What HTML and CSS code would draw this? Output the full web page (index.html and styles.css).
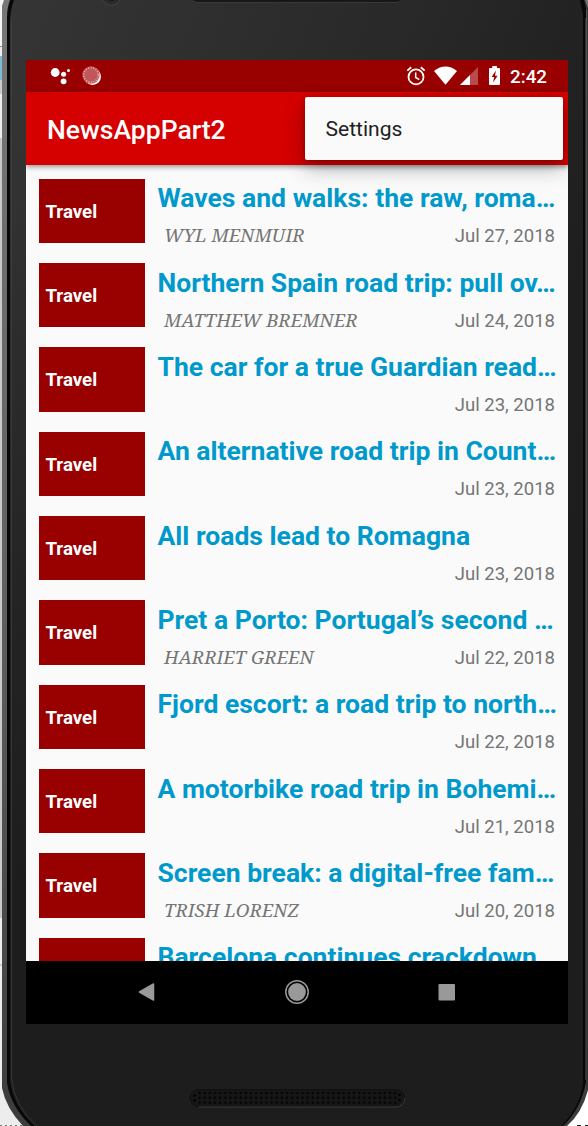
FILE: index.html
```html
<!DOCTYPE html>
<html lang="en">
<head>
<meta charset="utf-8">
<title>NewsAppPart2</title>
<link rel="stylesheet" href="styles.css">
</head>
<body>
<div class="stage">
  <svg class="device" width="588" height="1126" viewBox="0 0 588 1126" aria-hidden="true">
    <defs>
      <linearGradient id="body" gradientUnits="userSpaceOnUse" x1="10" y1="60" x2="580" y2="300">
        <stop offset="0" stop-color="#343435"/><stop offset=".5" stop-color="#2a2a2a"/><stop offset="1" stop-color="#1e1e1e"/>
      </linearGradient>
      <linearGradient id="lower" gradientUnits="userSpaceOnUse" x1="0" y1="200" x2="0" y2="900">
        <stop offset="0" stop-color="#1d1d1d" stop-opacity="0"/><stop offset="1" stop-color="#1d1d1d"/>
      </linearGradient>
      <linearGradient id="edge" x1="0" y1="0" x2="0" y2="1">
        <stop offset="0" stop-color="#777"/><stop offset=".5" stop-color="#626262"/><stop offset="1" stop-color="#3c3c3c"/>
      </linearGradient>
      <pattern id="holes" x="197" y="1090.5" width="5.15" height="4.9" patternUnits="userSpaceOnUse">
        <circle cx="2.5" cy="2.5" r="1.25" fill="#020202"/>
      </pattern>
    </defs>
    <rect width="588" height="1126" fill="#ededed"/>
    <rect width="3" height="46" fill="#f5f5f5"/>
    <rect y="46" width="3" height="1" fill="#888"/>
    <rect y="56" width="3" height="24" fill="#7fb9d5"/>
    <rect y="80" width="3" height="14" fill="#ccc"/>
    <rect y="138" width="3" height="780" fill="#c9c9c9"/>
    <rect y="964" width="3" height="2" fill="#ccc"/>
    <rect x="560" y="1070" width="28" height="56" fill="#fff"/>
    <path d="M0 1125.5h24" stroke="#777" stroke-dasharray="2 3"/>
    <path d="M577 1125.5h11" stroke="#222" stroke-dasharray="4 4"/>
    <path d="M4 0L2 6V1088Q6 1108 23 1126H567Q582 1113 588 1090V0Z" fill="url(#edge)"/>
    <path d="M584 0L587.500 10V1088" fill="none" stroke="#353535" stroke-width="2"/>
    <path d="M10 0Q7 8 7 18V1083Q11 1107 31 1126H563Q581 1109 586 1082V8L584 0Z" fill="#080808"/>
    <path d="M14 0Q10 10 10 24V1078Q12 1105 35 1126H561Q580 1107 583 1082V15L580 0Z" fill="url(#body)"/>
    <path d="M14 0Q10 10 10 24V1078Q12 1105 35 1126H561Q580 1107 583 1082V15L580 0Z" fill="url(#lower)"/>
    <path d="M11.5 18V1078Q14 1106 37 1126" fill="none" stroke="#454545" opacity=".6"/>
    <path d="M585.500 18V1080" fill="none" stroke="#303030"/>
    <circle cx="111.500" cy="-4" r="9.500" fill="#2b2b2c" stroke="#414142"/>
    <circle cx="111.500" cy="-4" r="5.500" fill="#1b1b1c"/>
    <rect x="190" y="-15" width="214" height="17.500" rx="8" fill="#171717" stroke="#393939"/>
    <rect x="190" y="1089.500" width="214.500" height="17" rx="8.500" fill="#161616" stroke="#101010"/>
    <path d="M199 1107H396Q404.500 1106 405 1098" fill="none" stroke="#3d3d3d"/>
    <rect x="197" y="1090.500" width="200" height="14.700" fill="url(#holes)"/>
    <g fill="#020202"><circle cx="194.500" cy="1095.500" r="1.300"/><circle cx="194.500" cy="1100.500" r="1.300"/><circle cx="399.500" cy="1095" r="1.300"/><circle cx="399.500" cy="1100" r="1.300"/></g>
  </svg>

  <main class="screen">
    <header class="statusbar">
      <div class="notifications">
        <svg width="22" height="20" viewBox="0 0 22 20" fill="#fff"><circle cx="5.200" cy="6.500" r="4.400"/><circle cx="13.600" cy="8.300" r="2.500"/><circle cx="13.600" cy="15.300" r="2.900"/><circle cx="18.500" cy="4.500" r="1.500"/></svg>
        <svg width="20" height="20" viewBox="0 0 20 20"><circle cx="10.500" cy="10.500" r="8.500" fill="#fff"/><circle cx="9" cy="9" r="8.700" fill="#c1575a"/><circle cx="9" cy="9" r="7.300" fill="none" stroke="#e5b3b3" stroke-width="1.700" stroke-dasharray="1 1.600"/></svg>
      </div>
      <div class="indicators">
        <svg class="alarm" width="20" height="20" viewBox="0 0 20 20" fill="none" stroke="#fff"><circle cx="10" cy="10.900" r="7.500" stroke-width="1.800"/><path d="M9.700 6.500v5l3.600 2.200" stroke-width="1.500"/><path d="M1.300 4.600L5.200 1.300M18.700 4.600l-3.900-3.300" stroke-width="1.800"/></svg>
        <svg class="wifi" width="23" height="20" viewBox="0 0 23 20"><path d="M0 5Q11.500-3.800 23 5L11.500 18.800Z" fill="#fff"/></svg>
        <svg class="signal" width="18" height="20" viewBox="0 0 18 20"><path d="M0 19L18 1v18Z" fill="#b84c4c"/><path d="M0 19L10 9v10Z" fill="#fff"/></svg>
        <svg class="battery" width="12" height="20" viewBox="0 0 12 20"><path d="M3.300 0h4.600v2H10q1 0 1 1v15q0 1-1 1H1q-1 0-1-1V3q0-1 1-1h2.300Z" fill="#fff"/><path d="M6.900 4.500L2.600 11h2.600L4 16.500 8.600 9.700H6Z" fill="#900"/></svg>
        <span class="clock">2:42</span>
      </div>
    </header>
    <div class="toolbar"><h1 class="app-title">NewsAppPart2</h1></div>
    <div class="menu">Settings</div>
    <section class="feed">
      <article class="story"><div class="section">Travel</div><div class="details"><h2 class="headline">Waves and walks: the raw, roma…</h2><div class="meta"><span class="author">WYL MENMUIR</span><time class="date">Jul 27, 2018</time></div></div></article>
      <article class="story"><div class="section">Travel</div><div class="details"><h2 class="headline">Northern Spain road trip: pull ov…</h2><div class="meta"><span class="author">MATTHEW BREMNER</span><time class="date">Jul 24, 2018</time></div></div></article>
      <article class="story"><div class="section">Travel</div><div class="details"><h2 class="headline">The car for a true Guardian read…</h2><div class="meta"><time class="date">Jul 23, 2018</time></div></div></article>
      <article class="story"><div class="section">Travel</div><div class="details"><h2 class="headline">An alternative road trip in Count…</h2><div class="meta"><time class="date">Jul 23, 2018</time></div></div></article>
      <article class="story"><div class="section">Travel</div><div class="details"><h2 class="headline">All roads lead to Romagna</h2><div class="meta"><time class="date">Jul 23, 2018</time></div></div></article>
      <article class="story"><div class="section">Travel</div><div class="details"><h2 class="headline">Pret a Porto: Portugal’s second …</h2><div class="meta"><span class="author">HARRIET GREEN</span><time class="date">Jul 22, 2018</time></div></div></article>
      <article class="story"><div class="section">Travel</div><div class="details"><h2 class="headline">Fjord escort: a road trip to north…</h2><div class="meta"><time class="date">Jul 22, 2018</time></div></div></article>
      <article class="story"><div class="section">Travel</div><div class="details"><h2 class="headline">A motorbike road trip in Bohemi…</h2><div class="meta"><time class="date">Jul 21, 2018</time></div></div></article>
      <article class="story"><div class="section">Travel</div><div class="details"><h2 class="headline">Screen break: a digital-free fam…</h2><div class="meta"><span class="author">TRISH LORENZ</span><time class="date">Jul 20, 2018</time></div></div></article>
      <article class="story"><div class="section"></div><div class="details"><h2 class="headline">Barcelona continues crackdown</h2></div></article>
    </section>
    <nav class="navbar">
      <svg width="18" height="26" viewBox="0 0 18 26"><path d="M1.500 13L15.500 5v16Z" fill="#999" stroke="#999" stroke-width="1.500" stroke-linejoin="round"/></svg>
      <svg width="26" height="26" viewBox="0 0 26 26"><circle cx="13" cy="13" r="11.200" fill="none" stroke="#999" stroke-width="1.500"/><circle cx="13" cy="13" r="8.900" fill="#999"/></svg>
      <svg width="18" height="26" viewBox="0 0 18 26"><rect x=".5" y="5" width="16.500" height="16.500" rx="1" fill="#999"/></svg>
    </nav>
  </main>
</div>
</body>
</html>
```

FILE: styles.css
```css
* { box-sizing: border-box; }
body { margin: 0; font-family: Roboto, sans-serif; }
svg { display: block; flex: none; }
h1, h2 { margin: 0; }
.stage { position: relative; width: 588px; height: 1126px; overflow: hidden; padding: 60px 20px 0 26px; }
.device { position: absolute; inset: 0; }
.screen { position: relative; width: 542px; height: 964px; display: flex; flex-direction: column; background: #fafafa; overflow: hidden; }
.statusbar { flex: none; height: 32px; background: #900; display: flex; justify-content: space-between; padding: 6px 21px 0 24px; }
.notifications { display: flex; gap: 10px; }
.indicators { display: flex; color: #fff; }
.wifi { margin-left: 8px; }
.signal { margin-left: 3px; }
.battery { margin-left: 11px; }
.clock { margin-left: 9px; font-size: 18.8px; font-weight: 500; line-height: 22px; }
.toolbar { flex: none; height: 73px; background: #d50000; box-shadow: 0 2px 5px rgba(0,0,0,.4); display: flex; align-items: center; padding: 3px 21px 0; z-index: 1; }
.app-title { font-size: 26.55px; font-weight: 500; line-height: 32px; color: #fff; }
.menu { position: absolute; z-index: 2; left: 278.5px; top: 37px; width: 258.5px; height: 63px; padding-left: 21px; background: #fafafa; border-radius: 2px; box-shadow: 0 8px 20px rgba(0,0,0,.3), 0 1px 4px rgba(0,0,0,.22); color: #212121; font-size: 21.09px; line-height: 64px; }
.feed { flex: none; height: 796px; overflow: hidden; padding: 13.5px 11px 0 13px; }
.story { display: flex; height: 84.35px; gap: 13px; }
.section { width: 105.5px; height: 64.5px; flex: none; background: #900; color: #fff; font-size: 18.7px; font-weight: 700; line-height: 67px; padding-left: 6.4px; }
.details { flex: 1; min-width: 0; }
.headline { font-size: 26.52px; line-height: 31px; padding-top: 3.8px; color: #09c; font-weight: 700; white-space: nowrap; }
.meta { display: flex; padding: 8.9px 2px 0 6.6px; line-height: 28px; color: #757575; font-size: 18.55px; }
.author { margin-top: -1px; font-family: "Noto Serif", "Liberation Serif", serif; font-style: italic; }
.date { margin-left: auto; }
.navbar { flex: none; height: 63px; background: #000; display: flex; align-items: center; justify-content: space-between; padding: 0 112px 1px; }
```
